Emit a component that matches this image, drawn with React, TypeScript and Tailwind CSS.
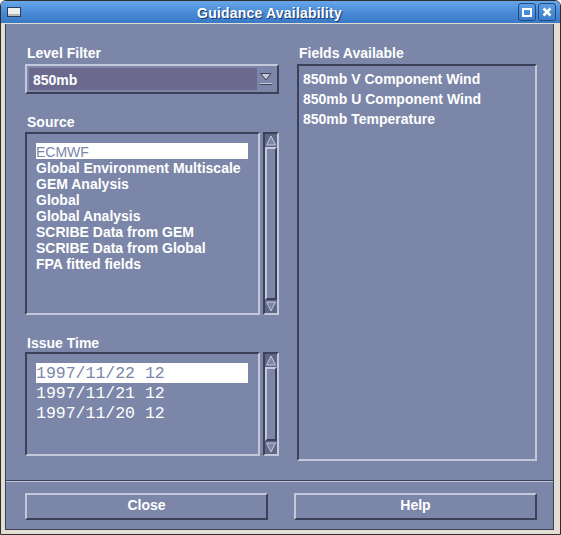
import React from 'react'

const sources = [
  'ECMWF',
  'Global Environment Multiscale',
  'GEM Analysis',
  'Global',
  'Global Analysis',
  'SCRIBE Data from GEM',
  'SCRIBE Data from Global',
  'FPA fitted fields',
]

const issueTimes = ['1997/11/22 12', '1997/11/21 12', '1997/11/20 12']

const fields = ['850mb V Component Wind', '850mb U Component Wind', '850mb Temperature']

function Label({ children }: { children: React.ReactNode }) {
  return <div className="h-[16px] text-[14px] leading-[18px] font-bold text-white pl-[2px]">{children}</div>
}

function ScrollBar() {
  return (
    <div className="w-[16px] h-full flex flex-col border-2 border-t-[#3d4157] border-l-[#3d4157] border-b-[#c4c8da] border-r-[#c4c8da]">
      <svg width="12" height="13" viewBox="0 0 12 13" className="shrink-0">
        <rect x="0" y="0" width="12" height="13" fill="#5f6787" />
        <path d="M6 2 L10.5 11 L1.5 11 Z" fill="#7c86a8" stroke="#c4c8da" strokeWidth="1" />
      </svg>
      <div className="flex-1 border-2 border-t-[#c4c8da] border-l-[#c4c8da] border-r-[#3d4157] border-b-[#3d4157] bg-[#7c86a8]" />
      <svg width="12" height="13" viewBox="0 0 12 13" className="shrink-0">
        <rect x="0" y="0" width="12" height="13" fill="#5f6787" />
        <path d="M1.5 2 L10.5 2 L6 11 Z" fill="#7c86a8" stroke="#c4c8da" strokeWidth="1" />
      </svg>
    </div>
  )
}

function Button({ children }: { children: React.ReactNode }) {
  return (
    <button className="w-[243px] h-[27px] pb-[3px] border-2 border-t-[#c4c8da] border-l-[#c4c8da] border-r-[#3d4157] border-b-[#3d4157] bg-[#7c86a8] text-white font-bold text-[14px] leading-[16px]">
      {children}
    </button>
  )
}

export default function App() {
  return (
    <div className="w-[561px] h-[535px] flex flex-col bg-[#e2ded4] border border-[#2e2e2e] rounded-t-[6px] overflow-hidden font-['Liberation_Sans',Arial,sans-serif]">
      {/* title bar */}
      <div className="h-[22px] shrink-0 flex items-center bg-gradient-to-b from-[#68a6e8] via-[#4a8cd8] to-[#3a78c4] px-[6px]">
        <div className="w-[14px] h-[10px] bg-[#eeeeee] border border-[#2a3f5e] shadow-[inset_0_-2px_0_#b8b8b8]" />
        <div className="flex-1 text-center text-white font-bold text-[14px] leading-[18px] pt-[2px] tracking-[0.2px] [text-shadow:1px_1px_0_#1e3a66]">
          Guidance Availability
        </div>
        <div className="flex gap-[2px] mr-[-2px]">
          <div className="w-[18px] h-[18px] rounded-[3px] border border-[#1f4a82] flex items-center justify-center">
            <div className="w-[10px] h-[9px] border-2 border-white" />
          </div>
          <div className="w-[18px] h-[18px] rounded-[3px] border border-[#1f4a82] flex items-center justify-center">
            <svg width="10" height="10" viewBox="0 0 10 10">
              <path d="M1.5 1.5 L8.5 8.5 M8.5 1.5 L1.5 8.5" stroke="white" strokeWidth="2.6" />
            </svg>
          </div>
        </div>
      </div>

      {/* body */}
      <div className="flex-1 pt-[1px] pl-[4px] pr-[6px] pb-[4px] flex">
        <div className="flex-1 flex flex-col bg-[#7c86a8] border-l border-r border-b border-[#3d4157]">
          <div className="h-[456px] flex pl-[19px] pr-[16px] pt-[20px] gap-[18px]">
            {/* left column */}
            <div className="w-[254px] flex flex-col">
              <Label>Level Filter</Label>
              <div className="mt-[4px] h-[30px] flex items-center p-[2px] border-2 border-t-[#c4c8da] border-l-[#c4c8da] border-r-[#3d4157] border-b-[#3d4157]">
                <div className="w-[228px] h-[22px] bg-[#6b6a8e] flex items-center pl-[4px] pt-[1px] text-white font-bold text-[14px] leading-[16px]">
                  850mb
                </div>
                <div className="flex-1 flex justify-center">
                  <svg width="16" height="16" viewBox="0 0 16 16">
                    <path d="M2.5 2.5 L13 2.5 L8 9 Z" fill="#c4c8da" stroke="#3d4157" strokeWidth="1" />
                    <rect x="2" y="12" width="12" height="1" fill="#c4c8da" />
                    <rect x="2" y="13" width="12" height="1" fill="#3d4157" />
                  </svg>
                </div>
              </div>

              <div className="mt-[19px]">
                <Label>Source</Label>
              </div>
              <div className="mt-[3px] h-[183px] flex gap-[3px]">
                <div className="w-[236px] h-full border-2 border-t-[#3d4157] border-l-[#3d4157] border-b-[#c4c8da] border-r-[#c4c8da] pt-[9px] pl-[9px] pr-[10px]">
                  {sources.map((s, i) => (
                    <div
                      key={s}
                      className={
                        i === 0
                          ? 'h-[16px] leading-[18px] text-[14px] bg-white text-[#7c86a8] whitespace-nowrap'
                          : 'h-[16px] leading-[18px] text-[14px] font-bold text-white whitespace-nowrap'
                      }
                    >
                      {s}
                    </div>
                  ))}
                </div>
                <ScrollBar />
              </div>

              <div className="mt-[19px]">
                <Label>Issue Time</Label>
              </div>
              <div className="mt-[2px] h-[104px] flex gap-[3px]">
                <div className="w-[236px] h-full border-2 border-t-[#3d4157] border-l-[#3d4157] border-b-[#c4c8da] border-r-[#c4c8da] pt-[9px] pl-[9px] pr-[10px] font-['Liberation_Mono',monospace]">
                  {issueTimes.map((t, i) => (
                    <div
                      key={t}
                      className={
                        i === 0
                          ? 'h-[20px] leading-[21px] text-[16.5px] bg-white text-[#7c86a8] whitespace-pre'
                          : 'h-[20px] leading-[21px] text-[16.5px] text-white whitespace-pre'
                      }
                    >
                      {t}
                    </div>
                  ))}
                </div>
                <ScrollBar />
              </div>
            </div>

            {/* right column */}
            <div className="w-[240px] flex flex-col">
              <Label>Fields Available</Label>
              <div className="mt-[4px] h-[397px] border-2 border-t-[#3d4157] border-l-[#3d4157] border-b-[#c4c8da] border-r-[#c4c8da] pt-[3px] pl-[4px]">
                {fields.map((f) => (
                  <div key={f} className="h-[20px] leading-[20px] text-[14px] font-bold text-white whitespace-nowrap">
                    {f}
                  </div>
                ))}
              </div>
            </div>
          </div>

          {/* separator */}
          <div className="h-[1px] bg-[#3d4157]" />
          <div className="h-[1px] bg-[#c4c8da]" />

          <div className="flex pl-[19px] pt-[11px] gap-[26px]">
            <Button>Close</Button>
            <Button>Help</Button>
          </div>
        </div>
      </div>
    </div>
  )
}
